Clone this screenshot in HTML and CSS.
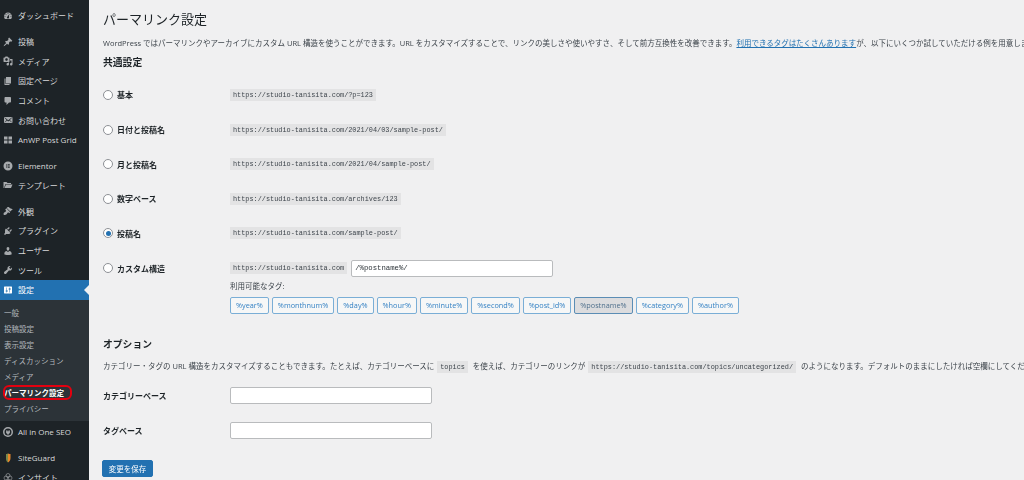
FILE: index.html
```html
<!DOCTYPE html>
<html lang="ja">
<head>
    <meta charset="UTF-8">
    <meta name="viewport" content="width=device-width, initial-scale=1.0">
    <title>パーマリンク設定</title>
    <link rel="stylesheet" href="styles.css">
</head>
<body>
    <nav class="sidebar">
        <a class="menu-item"><svg class="icon" viewBox="0 0 20 20"><path d="M3.76 16h12.48c1.1-1.37 1.76-3.11 1.76-5 0-4.42-3.58-8-8-8s-8 3.58-8 8c0 1.89.66 3.63 1.76 5zM10 4c.55 0 1 .45 1 1s-.45 1-1 1-1-.45-1-1 .45-1 1-1zM6 6c.55 0 1 .45 1 1s-.45 1-1 1-1-.45-1-1 .45-1 1-1zm8 0c.55 0 1 .45 1 1s-.45 1-1 1-1-.45-1-1 .45-1 1-1zm-5.37 5.55L12 7v6c0 1.1-.9 2-2 2s-2-.9-2-2c0-.57.24-1.08.63-1.45zM4 10c.55 0 1 .45 1 1s-.45 1-1 1-1-.45-1-1 .45-1 1-1zm12 0c.55 0 1 .45 1 1s-.45 1-1 1-1-.45-1-1 .45-1 1-1z"/></svg>ダッシュボード</a>
        <div class="menu-gap"></div>
        <a class="menu-item"><svg class="icon" viewBox="0 0 20 20"><path d="M10.44 3.02l1.82-1.82 6.36 6.35-1.83 1.82c-1.05-.68-2.48-.57-3.41.36l-.75.75c-.92.93-1.04 2.35-.35 3.41l-1.83 1.82-2.41-2.41-2.8 2.79c-.42.42-3.38 2.71-3.8 2.29s1.86-3.39 2.28-3.81l2.79-2.79L4.1 9.36l1.83-1.82c1.05.69 2.48.57 3.4-.36l.75-.75c.93-.92 1.05-2.35.36-3.41z"/></svg>投稿</a>
        <a class="menu-item"><svg class="icon" viewBox="0 0 20 20"><path d="M13 11V4c0-.55-.45-1-1-1h-1.67L9 1H5L3.67 3H2c-.55 0-1 .45-1 1v7c0 .55.45 1 1 1h10c.55 0 1-.45 1-1zM7 4.5c1.38 0 2.5 1.12 2.5 2.5S8.38 9.5 7 9.5 4.5 8.38 4.5 7 5.62 4.5 7 4.5zM14 6h5v10.5c0 1.38-1.12 2.5-2.5 2.5S14 17.88 14 16.5s1.12-2.5 2.5-2.5c.17 0 .34.02.5.05V9h-3V6zm-4 8.05V13h2v3.5c0 1.38-1.12 2.5-2.5 2.5S7 17.88 7 16.5 8.12 14 9.5 14c.17 0 .34.02.5.05z"/></svg>メディア</a>
        <a class="menu-item"><svg class="icon" viewBox="0 0 20 20"><path d="M6 15V2h10v13H6zm-1 1h8v2H3V5h2v11z"/></svg>固定ページ</a>
        <a class="menu-item"><svg class="icon" viewBox="0 0 20 20"><path d="M5 2h9c1.1 0 2 .9 2 2v7c0 1.1-.9 2-2 2h-2l-5 5v-5H5c-1.1 0-2-.9-2-2V4c0-1.1.9-2 2-2z"/></svg>コメント</a>
        <a class="menu-item"><svg class="icon" viewBox="0 0 20 20"><path d="M19 14.5v-9c0-.83-.67-1.5-1.5-1.5H3.49c-.83 0-1.5.67-1.5 1.5v9c0 .83.67 1.5 1.5 1.5H17.5c.83 0 1.5-.67 1.5-1.5zm-1.31-9.11c.33.33.15.67-.03.84L13.6 9.95l3.9 4.06c.12.14.2.36.06.51-.13.16-.43.15-.56.05l-4.37-3.73-2.14 1.95-2.13-1.95-4.37 3.73c-.13.1-.43.11-.56-.05-.14-.15-.06-.37.06-.51l3.9-4.06-4.06-3.72c-.18-.17-.36-.51-.03-.84s.67-.17.95.07l6.24 5.04 6.25-5.04c.28-.24.62-.4.95-.07z"/></svg>お問い合わせ</a>
        <a class="menu-item"><svg class="icon" viewBox="0 0 20 20"><path d="M2 3h7v6H2zM11 3h7v6h-7zM2 11h7v6H2zM11 11h7v6h-7z"/></svg>AnWP Post Grid</a>
        <div class="menu-gap"></div>
        <a class="menu-item"><svg class="icon" viewBox="0 0 20 20"><path fill-rule="evenodd" d="M10 1a9 9 0 1 0 0 18 9 9 0 0 0 0-18zM7 6h1.5v8H7zM10 6h3.5v1.6H10zM10 9.2h3.5v1.6H10zM10 12.4h3.5V14H10z"/></svg>Elementor</a>
        <a class="menu-item"><svg class="icon" viewBox="0 0 20 20"><path d="M1 4h6l2 2h7v2H5l-3 8H1zM6 9h13l-3 7H3z"/></svg>テンプレート</a>
        <div class="menu-gap"></div>
        <a class="menu-item"><svg class="icon" viewBox="0 0 20 20"><path d="M14.48 11.06L7.41 3.99l1.5-1.5c.5-.56 2.3-.47 3.51.32 1.21.8 1.43 1.28 2.91 2.1 1.18.64 2.45 1.26 4.45.85zm-.71.71L6.7 4.7 4.93 6.47c-.39.39-.39 1.02 0 1.41l1.06 1.06c.39.39.39 1.03 0 1.42-.6.6-1.43 1.11-2.21 1.69-.35.26-.7.53-1.01.84C1.43 13.23.39 16.26 1.58 17.55c1.19 1.29 4.28.05 5.61-1.26.31-.31.58-.65.84-1 .58-.78 1.09-1.61 1.69-2.21.39-.39 1.02-.39 1.41 0l1.06 1.06c.39.39 1.02.39 1.41 0z"/></svg>外観</a>
        <a class="menu-item"><svg class="icon" viewBox="0 0 20 20"><path d="M13.11 4.36L9.87 7.6 8 5.73l3.24-3.24c.35-.34 1.05-.2 1.56.32.52.51.66 1.21.31 1.55zm-8 1.77l.91-1.12 9.01 9.01-1.19.84c-.71.71-2.63 1.16-3.82 1.16H6.14L4.9 17.26c-.59.59-1.54.59-2.12 0-.59-.58-.59-1.53 0-2.12l1.24-1.24v-3.88c0-1.13.4-3.19 1.09-3.89zm7.26 3.97l3.24-3.24c.34-.35 1.04-.21 1.55.31.52.51.66 1.21.31 1.55l-3.24 3.25z"/></svg>プラグイン</a>
        <a class="menu-item"><svg class="icon" viewBox="0 0 20 20"><path d="M10 9.25c-2.27 0-2.73-3.44-2.73-3.44C7 4.02 7.82 2 9.97 2c2.16 0 2.98 2.02 2.71 3.81 0 0-.41 3.44-2.68 3.44zm0 2.57L12.72 10c2.39 0 4.52 2.33 4.52 4.53v2.49s-3.65 1.13-7.24 1.13c-3.65 0-7.24-1.13-7.24-1.13v-2.49c0-2.25 1.94-4.48 4.47-4.48z"/></svg>ユーザー</a>
        <a class="menu-item"><svg class="icon" viewBox="0 0 20 20"><path d="M16.68 9.77c-1.34 1.34-3.3 1.67-4.95.99l-5.41 6.52c-.99.99-2.59.99-3.58 0s-.99-2.59 0-3.57l6.52-5.42c-.68-1.65-.35-3.61.99-4.95 1.28-1.28 3.12-1.62 4.72-1.06l-2.89 2.89 2.82 2.82 2.86-2.87c.53 1.58.18 3.39-1.08 4.65z"/></svg>ツール</a>
        <a class="menu-item active"><svg class="icon" viewBox="0 0 20 20"><path d="M18 16V4c0-.55-.45-1-1-1H3c-.55 0-1 .45-1 1v12c0 .55.45 1 1 1h14c.55 0 1-.45 1-1zM8 11h1c.55 0 1 .45 1 1s-.45 1-1 1H8v1.5c0 .28-.22.5-.5.5s-.5-.22-.5-.5V13H6c-.55 0-1-.45-1-1s.45-1 1-1h1V5.5c0-.28.22-.5.5-.5s.5.22.5.5V11zm5-2h-1c-.55 0-1-.45-1-1s.45-1 1-1h1V5.5c0-.28.22-.5.5-.5s.5.22.5.5V7h1c.55 0 1 .45 1 1s-.45 1-1 1h-1v5.5c0 .28-.22.5-.5.5s-.5-.22-.5-.5V9z"/></svg>設定</a>
        <div class="submenu">
            <a class="sub-item">一般</a>
            <a class="sub-item">投稿設定</a>
            <a class="sub-item">表示設定</a>
            <a class="sub-item">ディスカッション</a>
            <a class="sub-item">メディア</a>
            <a class="sub-item current">パーマリンク設定</a>
            <a class="sub-item">プライバシー</a>
        </div>
        <a class="menu-item"><svg class="icon" viewBox="0 0 20 20"><path fill-rule="evenodd" d="M10 0a10 10 0 1 0 0 20 10 10 0 0 0 0-20zm0 3a7 7 0 1 1 0 14 7 7 0 0 1 0-14zM7 6h1.6v2.4h2.8V6H13v2.4h1V10c0 2-1.4 3.4-3.2 3.8V16H9.2v-2.2C7.4 13.400 6 12 6 10V8.400h1z"/></svg>All in One SEO</a>
        <div class="menu-gap"></div>
        <a class="menu-item"><svg class="icon" viewBox="0 0 20 20"><path fill="#e8862a" d="M10 1c2 1 4 1 5 1v8c0 4-2 7-5 9z"/><path fill="#7a8a4a" d="M10 1C8 2 7 2 6 2v8c0 4 1 7 4 9z"/></svg>SiteGuard</a>
        <a class="menu-item"><svg class="icon outline" viewBox="0 0 20 20"><circle cx="10" cy="7" r="4"/><circle cx="6" cy="12" r="4"/><circle cx="14" cy="12" r="4"/><path d="M8 14v5h4v-5"/></svg>インサイト</a>
    </nav>

    <main class="content">
        <h1>パーマリンク設定</h1>
        <p class="desc">WordPress ではパーマリンクやアーカイブにカスタム URL 構造を使うことができます。URL をカスタマイズすることで、リンクの美しさや使いやすさ、そして前方互換性を改善できます。<a href="#">利用できるタグはたくさんあります</a>が、以下にいくつか試していただける例を用意しました。</p>

        <h2 class="common-title">共通設定</h2>
        <form>
            <div class="form-row">
                <label class="row-label"><input type="radio" name="structure">基本</label>
                <code>https://studio-tanisita.com/?p=123</code>
            </div>
            <div class="form-row">
                <label class="row-label"><input type="radio" name="structure">日付と投稿名</label>
                <code>https://studio-tanisita.com/2021/04/03/sample-post/</code>
            </div>
            <div class="form-row">
                <label class="row-label"><input type="radio" name="structure">月と投稿名</label>
                <code>https://studio-tanisita.com/2021/04/sample-post/</code>
            </div>
            <div class="form-row">
                <label class="row-label"><input type="radio" name="structure">数字ベース</label>
                <code>https://studio-tanisita.com/archives/123</code>
            </div>
            <div class="form-row">
                <label class="row-label"><input type="radio" name="structure" checked>投稿名</label>
                <code>https://studio-tanisita.com/sample-post/</code>
            </div>
            <div class="form-row custom-row">
                <label class="row-label"><input type="radio" name="structure">カスタム構造</label>
                <div class="custom-field">
                    <div class="custom-line">
                        <code>https://studio-tanisita.com</code>
                        <input class="text-input mono" type="text" value="/%postname%/">
                    </div>
                    <div class="tags-title">利用可能なタグ:</div>
                    <div class="tags">
                        <button type="button" class="tag">%year%</button>
                        <button type="button" class="tag">%monthnum%</button>
                        <button type="button" class="tag">%day%</button>
                        <button type="button" class="tag">%hour%</button>
                        <button type="button" class="tag">%minute%</button>
                        <button type="button" class="tag">%second%</button>
                        <button type="button" class="tag">%post_id%</button>
                        <button type="button" class="tag selected">%postname%</button>
                        <button type="button" class="tag">%category%</button>
                        <button type="button" class="tag">%author%</button>
                    </div>
                </div>
            </div>

            <h2 class="option-title">オプション</h2>
            <p class="desc option-desc">カテゴリー・タグの URL 構造をカスタマイズすることもできます。たとえば、カテゴリーベースに <code>topics</code> を使えば、カテゴリーのリンクが <code>https://studio-tanisita.com/topics/uncategorized/</code> のようになります。デフォルトのままにしたければ空欄にしてください。</p>

            <div class="form-row">
                <label class="row-label plain">カテゴリーベース</label>
                <input class="text-input" type="text">
            </div>
            <div class="form-row">
                <label class="row-label plain">タグベース</label>
                <input class="text-input" type="text">
            </div>
            <button type="button" class="save">変更を保存</button>
        </form>
    </main>
</body>
</html>
```

FILE: styles.css
```css
html, body {
    height: 480px;
    overflow: hidden;
}

body {
    display: flex;
    margin: 0;
    background-color: #f0f0f1;
    color: #3c434a;
    font-family: "Open Sans", "Noto Sans CJK JP", sans-serif;
    font-size: 7.5px;
    filter: blur(0.4px);
}

/* sidebar */
.sidebar {
    flex: 0 0 89px;
    height: 480px;
    padding-top: 6px;
    box-sizing: border-box;
    background-color: #1d2327;
    color: #d8d9da;
    font-size: 8px;
    overflow: hidden;
}

.menu-item {
    display: flex;
    align-items: center;
    gap: 5px;
    height: 19.6px;
    padding-left: 3px;
    white-space: nowrap;
}

.menu-gap {
    height: 6.4px;
}

.icon {
    flex: 0 0 10px;
    width: 10px;
    height: 10px;
    fill: #a7aaad;
}

.icon.outline {
    fill: none;
    stroke: #a7aaad;
    stroke-width: 1.2;
}

.menu-item.active {
    position: relative;
    height: 20px;
    background-color: #2271b1;
    color: #fff;
}

.menu-item.active .icon {
    fill: #fff;
}

.menu-item.active::after {
    content: "";
    position: absolute;
    right: 0;
    top: 5px;
    border: 5px solid transparent;
    border-left-width: 0;
    border-right-color: #f0f0f1;
}

.submenu {
    padding: 5px 0 4px;
    margin-bottom: 1px;
    background-color: #2c3338;
    color: #b4b9be;
    font-size: 7.5px;
}

.sub-item {
    display: block;
    position: relative;
    height: 16px;
    line-height: 16px;
    padding-left: 4px;
    white-space: nowrap;
}

.sub-item.current {
    color: #fff;
    font-weight: bold;
}

/* red marker drawn over the current item */
.sub-item.current::after {
    content: "";
    position: absolute;
    left: 3px;
    top: 0.5px;
    width: 69px;
    height: 15px;
    box-sizing: border-box;
    border: 2px solid #e3000f;
    border-radius: 6px;
}

/* content */
.content {
    flex: 1;
    min-width: 0;
    padding: 11px 0 0 14px;
    overflow: hidden;
}

h1 {
    margin: 0 0 9px;
    color: #1d2327;
    font-size: 13px;
    font-weight: 400;
    line-height: 17px;
}

.desc {
    margin: 0;
    line-height: 12px;
    white-space: nowrap;
}

.desc a {
    color: #2271b1;
}

h2 {
    color: #1d2327;
    font-size: 9.8px;
    font-weight: 700;
    line-height: 14px;
}

.common-title {
    margin: 7px 0 7.7px;
}

.option-title {
    margin: 24px 0 8px;
}

.form-row {
    display: flex;
    align-items: center;
    height: 34.6px;
}

.row-label {
    display: flex;
    align-items: center;
    flex: 0 0 127px;
    color: #1d2327;
    font-size: 8px;
    font-weight: 600;
}

input[type="radio"] {
    appearance: none;
    display: grid;
    place-items: center;
    width: 10px;
    height: 10px;
    margin: 0 4px 0 0;
    background-color: #fff;
    border: 1px solid #8c8f94;
    border-radius: 50%;
    box-sizing: border-box;
}

input[type="radio"]:checked::before {
    content: "";
    width: 5px;
    height: 5px;
    background-color: #2271b1;
    border-radius: 50%;
}

code {
    display: inline-block;
    padding: 0 3px;
    background-color: rgba(0, 0, 0, 0.05);
    color: #3c434a;
    font-family: "Liberation Mono", monospace;
    font-size: 6.87px;
    line-height: 12px;
}

.option-desc code {
    margin: 0 3px 0 1px;
}

.custom-row {
    height: auto;
    align-items: flex-start;
    padding-top: 9px;
}

.custom-row .row-label {
    height: 17px;
}

.custom-line {
    display: flex;
    align-items: center;
    gap: 4px;
}

.text-input {
    width: 202px;
    height: 17px;
    padding: 0 4px;
    box-sizing: border-box;
    background-color: #fff;
    border: 1px solid #b9bbbd;
    border-radius: 2px;
    color: #2c3338;
    font-size: 7.5px;
}

.text-input.mono {
    padding-left: 3px;
    font-family: "Liberation Mono", monospace;
    font-size: 7.3px;
}

.tags-title {
    margin-top: 2px;
    height: 12px;
    line-height: 14px;
}

.tags {
    display: flex;
    gap: 3px;
    margin-top: 6px;
}

.tag {
    height: 17px;
    padding: 0 5px;
    background-color: #f6f7f7;
    border: 1px solid #7aaed6;
    border-radius: 2px;
    color: #3582c4;
    font-family: inherit;
    font-size: 7.3px;
}

.tag.selected {
    background-color: #dcdcde;
    border-color: #5b8db5;
    color: #50708c;
}

.save {
    display: block;
    width: 51px;
    height: 17px;
    margin-top: 12px;
    margin-left: -1px;
    padding: 0;
    background-color: #2271b1;
    border: 1px solid #2271b1;
    border-radius: 2px;
    color: #fff;
    font-family: inherit;
    font-size: 7.5px;
}

.option-desc {
    margin-bottom: 5.7px;
}
```
